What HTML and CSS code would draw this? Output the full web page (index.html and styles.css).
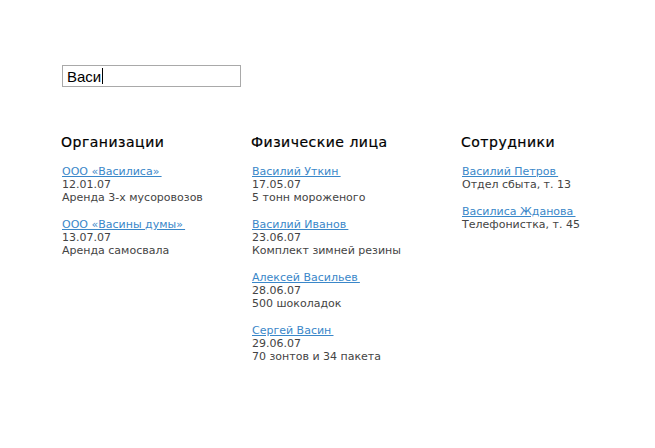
FILE: index.html
```html
<!DOCTYPE html>
<html lang="ru">
<head>
  <meta charset="UTF-8">
  <title>Поиск</title>
  <link rel="stylesheet" href="styles.css">
</head>
<body>
  <div class="page">
    <div class="search">
      <div class="search-input"><span>Васи</span><span class="caret"></span></div>
    </div>

    <div class="results">
      <div class="group">
        <h2>Организации</h2>
        <div class="item">
          <a href="#">ООО «Василиса»&thinsp;</a>
          <div>12.01.07</div>
          <div>Аренда 3-х мусоровозов</div>
        </div>
        <div class="item">
          <a href="#">ООО «Васины думы»&thinsp;</a>
          <div>13.07.07</div>
          <div>Аренда самосвала</div>
        </div>
      </div>

      <div class="group">
        <h2>Физические лица</h2>
        <div class="item">
          <a href="#">Василий Уткин&thinsp;</a>
          <div>17.05.07</div>
          <div>5 тонн мороженого</div>
        </div>
        <div class="item">
          <a href="#">Василий Иванов&thinsp;</a>
          <div>23.06.07</div>
          <div>Комплект зимней резины</div>
        </div>
        <div class="item">
          <a href="#">Алексей Васильев&thinsp;</a>
          <div>28.06.07</div>
          <div>500 шоколадок</div>
        </div>
        <div class="item">
          <a href="#">Сергей Васин&thinsp;</a>
          <div>29.06.07</div>
          <div>70 зонтов и 34 пакета</div>
        </div>
      </div>

      <div class="group">
        <h2>Сотрудники</h2>
        <div class="item">
          <a href="#">Василий Петров&thinsp;</a>
          <div>Отдел сбыта, т. 13</div>
        </div>
        <div class="item">
          <a href="#">Василиса Жданова&thinsp;</a>
          <div>Телефонистка, т. 45</div>
        </div>
      </div>
    </div>
  </div>
</body>
</html>
```

FILE: styles.css
```css
body {
  margin: 0;
  background: #fff;
  font-family: "DejaVu Sans", Verdana, sans-serif;
  font-size: 11px;
  color: #444;
}
.page {
  padding: 65px 0 0 61px;
}
.search {
  padding-left: 1px;
}
.search-input {
  width: 179px;
  height: 22px;
  box-sizing: border-box;
  border: 1px solid #a9a9a9;
  padding: 0 4px;
  display: flex;
  align-items: center;
  font-family: "Liberation Sans", Arial, sans-serif;
  font-size: 15px;
  color: #000;
}
.caret {
  display: inline-block;
  width: 1px;
  height: 16px;
  margin-left: 1px;
  background: #000;
}
.results {
  display: grid;
  grid-template-columns: 190px 210px 180px;
  margin-top: 47px;
}
h2 {
  margin: 0 0 14px;
  font-size: 14px;
  font-weight: normal;
  line-height: 17px;
  letter-spacing: 0.5px;
  color: #000;
  -webkit-text-stroke: 0.2px #000;
}
.item {
  padding-left: 1px;
  line-height: 13px;
  margin-bottom: 14px;
}
.item a {
  color: #3a87c9;
  text-decoration: underline;
}
```
